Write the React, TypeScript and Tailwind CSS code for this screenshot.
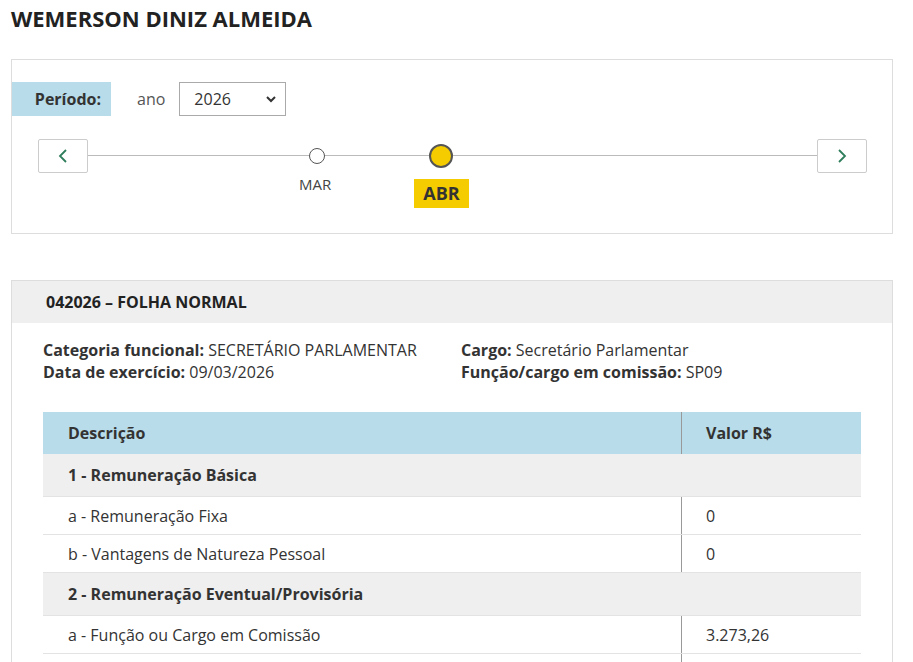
import React from "react";

const Sec = ({ t }: { t: string }) => (
  <div className="flex h-[43px] items-center bg-[#efefef] border-b border-[#e3e3e3] px-[25px] font-bold text-[16px]">{t}</div>
);
const Row = ({ a, b }: { a: string; b: string }) => (
  <div className="flex h-[38px] border-b border-[#e3e3e3] text-[16px]">
    <div className="w-[639px] flex items-center px-[25px] border-r border-[#999]">{a}</div>
    <div className="flex-1 flex items-center px-[24px]">{b}</div>
  </div>
);

export default function App() {
  return (
    <div className="bg-white text-[#333] px-[11px] pt-[3px] w-[913px] h-[662px] overflow-hidden" style={{ fontFamily: '"Open Sans", sans-serif' }}>
      <h1 className="text-[22px] font-bold text-[#222] h-[30px] leading-[30px]">WEMERSON DINIZ ALMEIDA</h1>
      <div className="mt-[26px] border border-[#ddd] w-[882px] h-[175px] pt-[22px]">
        <div className="flex items-center h-[34px]">
          <div className="bg-[#b8dcea] w-[99px] h-full flex items-center justify-end pr-[10px] font-bold text-[16px]">Período:</div>
          <span className="ml-[26px] text-[16px] text-[#555]">ano</span>
          <div className="ml-[14px] w-[107px] h-full border border-[#aaa] flex items-center justify-between pl-[14px] pr-[8px] text-[16px]">
            2026
            <svg width="12" height="12" viewBox="0 0 12 12"><path d="M2 4l4 4 4-4" stroke="#333" strokeWidth="2" fill="none" /></svg>
          </div>
        </div>
        <div className="flex mt-[23px] ml-[26px] w-[829px] h-[75px]">
          <div className="w-[50px] h-[34px] border border-[#ccc] rounded-[2px] flex items-center justify-center shrink-0">
            <svg width="12" height="16" viewBox="0 0 12 16"><path d="M9 2L3 8l6 6" stroke="#2e7d5b" strokeWidth="1.8" fill="none" /></svg>
          </div>
          <div className="flex-1 relative">
            <div className="absolute left-0 right-0 top-[16px] h-px bg-[#bbb]" />
            <div className="absolute left-[221px] top-[9px] w-[16px] h-[16px] rounded-full bg-white border border-[#555]" />
            <div className="absolute left-[211px] top-[34px] text-[15px] text-[#444]">MAR</div>
            <div className="absolute left-[341px] top-[5px] w-[24px] h-[24px] rounded-full bg-[#f5cc00] border-2 border-[#555]" />
            <div className="absolute left-[326px] top-[40px] w-[55px] h-[29px] bg-[#f5cc00] flex items-center justify-center font-bold text-[18px] text-[#333]">ABR</div>
          </div>
          <div className="w-[50px] h-[34px] border border-[#ccc] rounded-[2px] flex items-center justify-center shrink-0">
            <svg width="12" height="16" viewBox="0 0 12 16"><path d="M3 2l6 6-6 6" stroke="#2e7d5b" strokeWidth="1.8" fill="none" /></svg>
          </div>
        </div>
      </div>
      <div className="mt-[46px] border-x border-t border-[#ddd] w-[882px]">
        <div className="bg-[#efefef] h-[42px] flex items-center pl-[34px] font-bold text-[16px] text-[#222]">042026 – FOLHA NORMAL</div>
        <div className="px-[31px] pt-[16px]">
          <div className="grid grid-cols-[418px_1fr] text-[16px] leading-[22px]">
            <div><b>Categoria funcional:</b> SECRETÁRIO PARLAMENTAR</div>
            <div><b>Cargo:</b> Secretário Parlamentar</div>
            <div><b>Data de exercício:</b> 09/03/2026</div>
            <div><b>Função/cargo em comissão:</b> SP09</div>
          </div>
          <div className="mt-[29px] w-[818px]">
            <div className="flex h-[42px] bg-[#b8dcea] font-bold text-[16px]">
              <div className="w-[639px] flex items-center px-[25px] border-r border-[#999]">Descrição</div>
              <div className="flex-1 flex items-center px-[24px]">Valor R$</div>
            </div>
            <Sec t="1 - Remuneração Básica" />
            <Row a="a - Remuneração Fixa" b="0" />
            <Row a="b - Vantagens de Natureza Pessoal" b="0" />
            <Sec t="2 - Remuneração Eventual/Provisória" />
            <Row a="a - Função ou Cargo em Comissão" b="3.273,26" />
            <Row a="" b="" />
          </div>
        </div>
      </div>
    </div>
  );
}
